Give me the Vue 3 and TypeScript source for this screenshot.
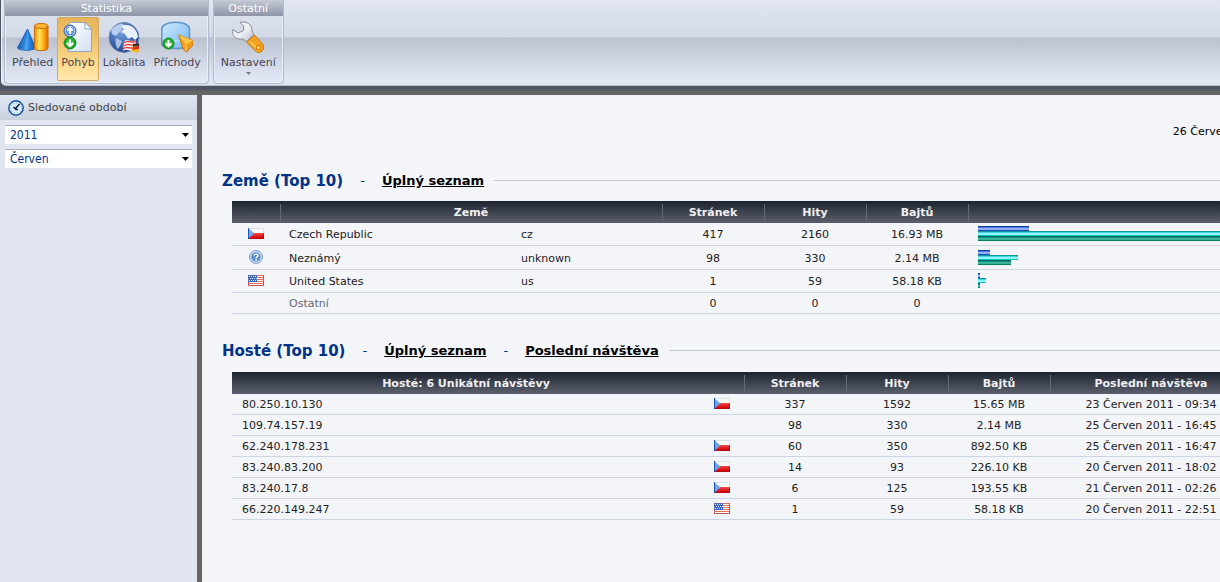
<script setup lang="ts">
import { ref } from 'vue'

interface Country {
  icon: string
  name: string
  code: string
  pages: string
  hits: string
  bytes: string
  bars: number[]
  size: string
}
interface Host {
  address: string
  flag: string
  pages: string
  hits: string
  bytes: string
  last: string
}

const active = ref('Pohyb')
const year = ref('2011')
const month = ref('Červen')

const tools = ['Přehled', 'Pohyb', 'Lokalita', 'Příchody']

const countries: Country[] = [
  { icon: 'cz', name: 'Czech Republic', code: 'cz', pages: '417', hits: '2160', bytes: '16.93 MB', bars: [51, 262, 261], size: 'mid' },
  { icon: 'unknown', name: 'Neznámý', code: 'unknown', pages: '98', hits: '330', bytes: '2.14 MB', bars: [12, 40, 33], size: 'tall' },
  { icon: 'us', name: 'United States', code: 'us', pages: '1', hits: '59', bytes: '58.18 KB', bars: [2, 8, 2], size: 'mid' },
  { icon: '', name: 'Ostatní', code: '', pages: '0', hits: '0', bytes: '0', bars: [], size: 'rest' },
]

const hosts: Host[] = [
  { address: '80.250.10.130', flag: 'cz', pages: '337', hits: '1592', bytes: '15.65 MB', last: '23 Červen 2011 - 09:34' },
  { address: '109.74.157.19', flag: '', pages: '98', hits: '330', bytes: '2.14 MB', last: '25 Červen 2011 - 16:45' },
  { address: '62.240.178.231', flag: 'cz', pages: '60', hits: '350', bytes: '892.50 KB', last: '25 Červen 2011 - 16:47' },
  { address: '83.240.83.200', flag: 'cz', pages: '14', hits: '93', bytes: '226.10 KB', last: '20 Červen 2011 - 18:02' },
  { address: '83.240.17.8', flag: 'cz', pages: '6', hits: '125', bytes: '193.55 KB', last: '21 Červen 2011 - 02:26' },
  { address: '66.220.149.247', flag: 'us', pages: '1', hits: '59', bytes: '58.18 KB', last: '20 Červen 2011 - 22:51' },
]
</script>

<template>
  <div class="page">
    <svg class="defs" width="0" height="0" aria-hidden="true">
      <defs>
        <linearGradient id="gCone" x1="0" x2="1" y1="0" y2="0">
          <stop offset="0" stop-color="#1667c8" /><stop offset=".4" stop-color="#6fc0fb" /><stop offset=".6" stop-color="#2c8eea" /><stop offset="1" stop-color="#1253b0" />
        </linearGradient>
        <linearGradient id="gCyl" x1="0" x2="1" y1="0" y2="0">
          <stop offset="0" stop-color="#f08a00" /><stop offset=".35" stop-color="#ffe45c" /><stop offset=".65" stop-color="#ffb011" /><stop offset="1" stop-color="#e06a00" />
        </linearGradient>
        <linearGradient id="gPaper" x1="0" x2="1" y1="0" y2="1">
          <stop offset="0" stop-color="#ffffff" /><stop offset="1" stop-color="#d3e0f1" />
        </linearGradient>
        <radialGradient id="gGlobe" cx=".4" cy=".3" r=".75">
          <stop offset="0" stop-color="#7fa5dc" /><stop offset=".6" stop-color="#3c65ae" /><stop offset="1" stop-color="#1c3b80" />
        </radialGradient>
        <linearGradient id="gPie" x1="0" x2="1" y1="0" y2="1">
          <stop offset="0" stop-color="#d3ebff" /><stop offset=".55" stop-color="#9ccdf8" /><stop offset="1" stop-color="#7ab8ee" />
        </linearGradient>
        <radialGradient id="gGreen"><stop offset="0" stop-color="#6de062" /><stop offset="1" stop-color="#129a1a" /></radialGradient>
        <radialGradient id="gBlue"><stop offset="0" stop-color="#92bdf7" /><stop offset="1" stop-color="#3069c9" /></radialGradient>
        <linearGradient id="gMetal" x1="0" x2="1" y1="0" y2="1">
          <stop offset="0" stop-color="#ffffff" /><stop offset=".6" stop-color="#e6e8ee" /><stop offset="1" stop-color="#b8bcc6" />
        </linearGradient>
        <linearGradient id="gRed" x1="0" x2="0" y1="0" y2="1">
          <stop offset="0" stop-color="#f04c48" /><stop offset=".6" stop-color="#e01418" /><stop offset="1" stop-color="#c00008" />
        </linearGradient>
        <symbol id="flag-cz" viewBox="0 0 16 11">
          <path d="M0 0H16V5.500H0z" fill="#f8f8f9" /><path d="M.5.5H15.500V5" fill="none" stroke="#dfe0e3" />
          <path d="M0 5H16V11H0z" fill="url(#gRed)" /><path d="M.5 10.500H15.500V6" fill="none" stroke="#b90a12" />
          <path d="M0 0L6.500 5.500L0 11z" fill="#74a4df" /><path d="M.5 0V11" stroke="#1756b4" />
        </symbol>
        <symbol id="flag-us" viewBox="0 0 16 11">
          <path d="M0 0H16V11H0z" fill="#fff" />
          <path d="M0 .5H16M0 2.500H16M0 4.500H16M0 6.500H16M0 8.500H16M0 10.500H16" stroke="#f06a5c" />
          <path d="M0 0H9V7H0z" fill="#3165c8" />
          <path d="M1 1.500H9M2 3.500H9M1 5.500H9" stroke="#e4edff" stroke-dasharray="1 1" />
          <path d="M.5 7V10.500H15.500V.5" fill="none" stroke="#b65a55" />
          <path d="M.5 7V.5H9" fill="none" stroke="#626cac" />
        </symbol>
        <symbol id="unknown" viewBox="0 0 14 14">
          <circle cx="7" cy="7" r="6.500" fill="#c6daee" stroke="#7da3cd" /><circle cx="7" cy="7" r="4.700" fill="#5f90c6" />
          <path d="M5.200 5.600C5.200 3.600 8.900 3.600 8.900 5.500C8.900 6.800 7.100 6.900 7.100 8.300" fill="none" stroke="#fff" stroke-width="1.400" /><circle cx="7.100" cy="10" r=".9" fill="#fff" />
        </symbol>
      </defs>
    </svg>

    <header class="ribbon">
      <section class="group">
        <h2>Statistika</h2>
        <div class="tools">
          <button v-for="t in tools" :key="t" type="button" class="tool" :class="{ on: active === t }" @click="active = t">
            <svg v-if="t === 'Přehled'" width="32" height="32" viewBox="0 0 32 32">
              <path d="M10.500 8L18.500 27C16 30 3 30 .5 27z" fill="url(#gCone)" stroke="#1b61b8" />
              <path d="M10.500 8L8 28C5 28 2 27.500 .5 27z" fill="#0f5dba" opacity=".6" />
              <path d="M17.500 5V27C17.500 30.500 31 30.500 31 27V5z" fill="url(#gCyl)" stroke="#c8690b" />
              <ellipse cx="24.250" cy="5" rx="6.750" ry="2.600" fill="#ffb52a" stroke="#c8690b" />
            </svg>
            <svg v-else-if="t === 'Pohyb'" width="32" height="32" viewBox="0 0 32 32">
              <path d="M8.500 1.500H23L29.500 8V30.500H6.500V4z" fill="url(#gPaper)" stroke="#8ea7c5" />
              <path d="M23 1.500V8H29.500z" fill="#f8fbff" stroke="#8ea7c5" />
              <circle cx="8" cy="10" r="6" fill="url(#gBlue)" stroke="#3265b5" /><circle cx="8" cy="10" r="4.800" fill="none" stroke="#cfe0fb" />
              <path d="M8 13V7M5.300 9.500L8 6.800L10.700 9.500" fill="none" stroke="#fff" stroke-width="2" />
              <circle cx="8" cy="22" r="6" fill="url(#gGreen)" stroke="#148b22" />
              <path d="M8 18.500V25M4.800 22L8 25.200L11.200 22" fill="none" stroke="#fff" stroke-width="2" />
            </svg>
            <svg v-else-if="t === 'Lokalita'" width="32" height="32" viewBox="0 0 32 32">
              <circle cx="16" cy="16.500" r="15" fill="url(#gGlobe)" stroke="#6f88b6" />
              <path d="M3 9C7 4 12 2 15 3L17 5L13 7L14 9L10 12L8 15L4 13z" fill="#b9cdec" />
              <path d="M13 6C17 2 26 4 29 12L30 16L27 19L24 16L20 18L17 13L13 11L16 8z" fill="#eaf1fb" />
              <path d="M8 17L14 20L12 25L10 28C8 26 7 22 8 17z" fill="#a9c0e4" />
              <path d="M16 21C19 17 22 22 28 19L27 30C22 31 19 27 15 30z" fill="#fff" />
              <path d="M16 22C20 18 23 23 28 20M16 25C20 21 23 26 28 23M15 28C19 24 22 29 27 26" fill="none" stroke="#e44444" stroke-width="1.500" />
              <path d="M25 23C27 24 29 23 31 22V31C28 33 26 30 23 31z" fill="#f2be2b" />
              <path d="M25 22.500C28 24 29 22 31 22V25C28 26 27 25 25 26z" fill="#333" /><path d="M25 26C28 27 29 25 31 25V28L24 29z" fill="#d92b20" />
            </svg>
            <svg v-else width="32" height="32" viewBox="0 0 32 32">
              <path d="M.8 8C.8 -1 28.500 -1 28.500 8V23C28.500 29 .8 29 .8 23z" fill="url(#gPie)" stroke="#5b94ce" stroke-width="1.500" />
              <path d="M2 17C6 21 22 21 27 17" fill="none" stroke="#ddf2ff" opacity=".7" />
              <path d="M17.500 14L32 19.500V24L25.500 31L22 28z" fill="#f39b12" stroke="#bd761a" />
              <path d="M17.500 14L32 19.500L25 24z" fill="#ffc54b" /><path d="M25 24V30" stroke="#ffe194" />
              <circle cx="7.500" cy="22.500" r="5.500" fill="url(#gGreen)" stroke="#148b22" />
              <path d="M7.500 19V25.500M4.500 22.500L7.500 25.500L10.500 22.500" fill="none" stroke="#fff" stroke-width="1.800" />
            </svg>
            <span>{{ t }}</span>
          </button>
        </div>
      </section>
      <section class="group">
        <h2>Ostatní</h2>
        <div class="tools">
          <button type="button" class="tool">
            <svg width="32" height="32" viewBox="0 0 32 32">
              <path d="M14.500 21L22.500 14L31 23.500C33.500 27.500 29 33 25 31.500z" fill="#f4a11c" stroke="#c87916" />
              <path d="M18 20.500L27 29.500" stroke="#ffd466" stroke-width="1.500" />
              <circle cx="26.500" cy="26.500" r="2.300" fill="#ffc247" stroke="#d5780b" />
              <path d="M8 1.500C14 -.5 21 3.500 20 10L22 13.500L14.500 20.500L11 18C4.500 19.500 -1 14.500 .8 8.500L6 12L11.500 9.500L11.500 5z" fill="url(#gMetal)" stroke="#868b98" />
            </svg>
            <span>Nastavení</span>
            <svg class="more" width="5" height="3" viewBox="0 0 5 3"><path d="M0 0H5L2.500 3z" fill="#72767f" /></svg>
          </button>
        </div>
      </section>
    </header>

    <div class="body">
      <aside class="side">
        <h2 class="side-title">
          <svg width="16" height="16" viewBox="0 0 16 16">
            <circle cx="8" cy="8" r="7.200" fill="#d9eeff" stroke="#1b549f" stroke-width="1.500" />
            <circle cx="8" cy="8" r="5.200" fill="none" stroke="#6fa9dd" stroke-dasharray="1 2" />
            <path d="M11.500 4L7.500 8.500M5.500 7L8 9.500H10" fill="none" stroke="#10233f" stroke-width="1.600" />
          </svg>
          Sledované období
        </h2>
        <div class="pick">
          <select v-model="year" aria-label="Rok"><option>2011</option></select>
          <svg width="7" height="4" viewBox="0 0 7 4"><path d="M0 0H7L3.500 4z" fill="#000" /></svg>
        </div>
        <div class="pick">
          <select v-model="month" aria-label="Měsíc"><option>Červen</option></select>
          <svg width="7" height="4" viewBox="0 0 7 4"><path d="M0 0H7L3.500 4z" fill="#000" /></svg>
        </div>
      </aside>

      <main class="main">
        <div class="content">
          <p class="date">26 Červen 2011</p>

          <div class="heading">
            <h1>Země (Top 10)</h1><span class="dash">-</span><a href="#zeme">Úplný seznam</a>
          </div>
          <table class="first">
            <colgroup><col class="c-icon"><col class="c-name"><col class="c-code"><col class="c-num"><col class="c-num"><col class="c-num"><col></colgroup>
            <thead>
              <tr><th></th><th colspan="2">Země</th><th>Stránek</th><th>Hity</th><th>Bajtů</th><th></th></tr>
            </thead>
            <tbody>
              <tr v-for="c in countries" :key="c.name" :class="c.size">
                <td class="pic">
                  <svg v-if="c.icon === 'unknown'" width="14" height="14"><use href="#unknown" /></svg>
                  <svg v-else-if="c.icon" width="16" height="11"><use :href="'#flag-' + c.icon" /></svg>
                </td>
                <td class="left">{{ c.name }}</td>
                <td class="left">{{ c.code }}</td>
                <td>{{ c.pages }}</td><td>{{ c.hits }}</td><td>{{ c.bytes }}</td>
                <td class="left pic"><div v-for="(w, i) in c.bars" :key="i" class="bar" :class="'bar' + i" :style="{ width: w + 'px' }"></div></td>
              </tr>
            </tbody>
          </table>

          <div class="heading">
            <h1>Hosté (Top 10)</h1><span class="dash">-</span><a href="#hoste">Úplný seznam</a><span class="dash">-</span><a href="#posledni">Poslední návštěva</a>
          </div>
          <table class="second">
            <colgroup><col class="c-host"><col class="c-flag"><col class="c-num"><col class="c-num"><col class="c-num"><col></colgroup>
            <thead>
              <tr><th>Hosté: 6 Unikátní návštěvy</th><th class="plain"></th><th>Stránek</th><th>Hity</th><th>Bajtů</th><th>Poslední návštěva</th></tr>
            </thead>
            <tbody>
              <tr v-for="h in hosts" :key="h.address">
                <td class="left">{{ h.address }}</td>
                <td class="pic"><svg v-if="h.flag" width="16" height="11"><use :href="'#flag-' + h.flag" /></svg></td>
                <td>{{ h.pages }}</td><td>{{ h.hits }}</td><td>{{ h.bytes }}</td><td>{{ h.last }}</td>
              </tr>
            </tbody>
          </table>
        </div>
      </main>
    </div>
  </div>
</template>

<style>
body {
  margin: 0;
  background: #666;
}
</style>

<style scoped>
.page {
  display: flex;
  flex-direction: column;
  min-height: 100vh;
  overflow: hidden;
  background: linear-gradient(#4b5563 0, #4b5563 88px, #666 92px);
  font: 11px/14px Verdana, "DejaVu Sans", sans-serif;
  color: #222;
}
.defs {
  position: absolute;
}
h1,
h2,
p {
  margin: 0;
}
.ribbon {
  display: flex;
  gap: 4px;
  height: 85px;
  margin: 0 0 9px 1px;
  padding: 0 2px;
  border-left: 1px solid #eef1f7;
  border-bottom: 1px solid #b5bdcc;
  border-bottom-left-radius: 5px;
  background: linear-gradient(#e1e6f2 0, #d3d9e6 37px, #bbc1cf 38px, #cbd1de 55px, #e0e6f4 78px);
}
.group {
  box-sizing: border-box;
  height: 84px;
  border: 1px solid #b3bac9;
  border-top: 0;
  border-radius: 0 0 4px 4px;
  box-shadow: inset -1px -1px #e9edf6, inset 1px 0 #e9edf6;
}
.group h2 {
  height: 16px;
  background: linear-gradient(#c5cad6, #8e95a8);
  color: #fff;
  font-size: 11px;
  font-weight: normal;
  line-height: 17px;
  text-align: center;
}
.tools {
  display: flex;
  padding: 1px 3px 0;
}
.tool {
  display: flex;
  flex-direction: column;
  align-items: center;
  box-sizing: border-box;
  height: 64px;
  padding: 3px 3px 0;
  border: 1px solid transparent;
  border-radius: 2px;
  background: none;
  font: inherit;
  color: #464655;
}
.tool span {
  margin-top: 3px;
}
.tool.on {
  border-color: #d0a863;
  background: linear-gradient(#e7b45a 0, #edbf69 20px, #ffd98b 45px, #ffe9b0);
}
.more {
  margin-top: 2px;
}
.body {
  display: flex;
  flex: 1;
  gap: 5px;
}
.side {
  flex: 0 0 197px;
  background: #e1e5ef;
}
.side-title {
  display: flex;
  align-items: center;
  gap: 4px;
  height: 25px;
  margin-bottom: 5px;
  padding-left: 8px;
  background: linear-gradient(#e0e8f6, #c9d0de);
  color: #444;
  font-size: 11px;
  font-weight: normal;
}
.pick {
  display: flex;
  align-items: center;
  height: 18px;
  margin: 0 5px 5px;
  padding-right: 3px;
  border-top: 1px solid #a8acb4;
  background: #fff;
}
.pick select {
  flex: 1;
  height: 18px;
  padding: 1px 5px 0;
  border: 0;
  appearance: none;
  background: none;
  font: 12px/17px Tahoma, "DejaVu Sans Condensed", sans-serif;
  color: #003388;
}
.main {
  flex: 1;
  min-width: 0;
  overflow: hidden;
  background: #f4f5f9;
}
.content {
  min-width: 1039px;
  padding: 30px 11px 0 20px;
}
.date {
  height: 14px;
  margin-bottom: 32px;
  color: #000;
  text-align: right;
}
.heading {
  display: flex;
  align-items: center;
  height: 20px;
  color: #003388;
  font-size: 13px;
  line-height: 20px;
}
.heading::after {
  content: "";
  flex: 1;
  height: 1px;
  margin: 0 0 1px 10px;
  background: #c5c9d1;
}
.heading h1 {
  font-size: 15px;
}
.dash {
  padding: 0 17px;
}
.heading a {
  color: #000;
  font-weight: bold;
}
table {
  width: calc(100% - 19px);
  margin-left: 10px;
  border-collapse: separate;
  border-spacing: 0;
  table-layout: fixed;
}
.first {
  margin-top: 10px;
  margin-bottom: 27px;
}
.second {
  margin-top: 11px;
}
.c-icon {
  width: 48px;
}
.c-name {
  width: 232px;
}
.c-code {
  width: 150px;
}
.c-num {
  width: 102px;
}
.c-host {
  width: 468px;
}
.c-flag {
  width: 44px;
}
th,
td {
  padding: 2px 0 0;
  text-align: center;
  white-space: nowrap;
}
thead tr {
  background: linear-gradient(#1d2430, #5b606c);
}
th {
  height: 20px;
  background: linear-gradient(#636975, #636975) left 0 top 3px / 1px 17px no-repeat;
  color: #f0f0f0;
}
th:first-child,
th.plain {
  background: none;
}
td {
  height: 18px;
  border-bottom: 1px solid #ccd5e4;
}
.mid td {
  height: 20px;
}
.tall td {
  height: 21px;
}
td.pic {
  padding-top: 0;
  padding-bottom: 1px;
}
.rest .left {
  color: #667;
}
td svg {
  display: block;
  margin: 0 auto;
}
.left {
  padding-left: 9px;
  text-align: left;
}
.second .left,
.left.pic {
  padding-left: 10px;
}
.bar {
  height: 5px;
}
.bar0 {
  background: linear-gradient(#123f96 1px, #4f78de 1px 2px, #8fb0fb 2px 4px, #204eb8 4px);
}
.bar1 {
  background: linear-gradient(#0b9a98 1px, #45d6dc 1px 2px, #8ff5fb 2px 4px, #06c5cf 4px);
}
.bar2 {
  background: linear-gradient(#02695a 1px, #139476 1px 2px, #38b49d 2px 4px, #078062 4px);
}
</style>
